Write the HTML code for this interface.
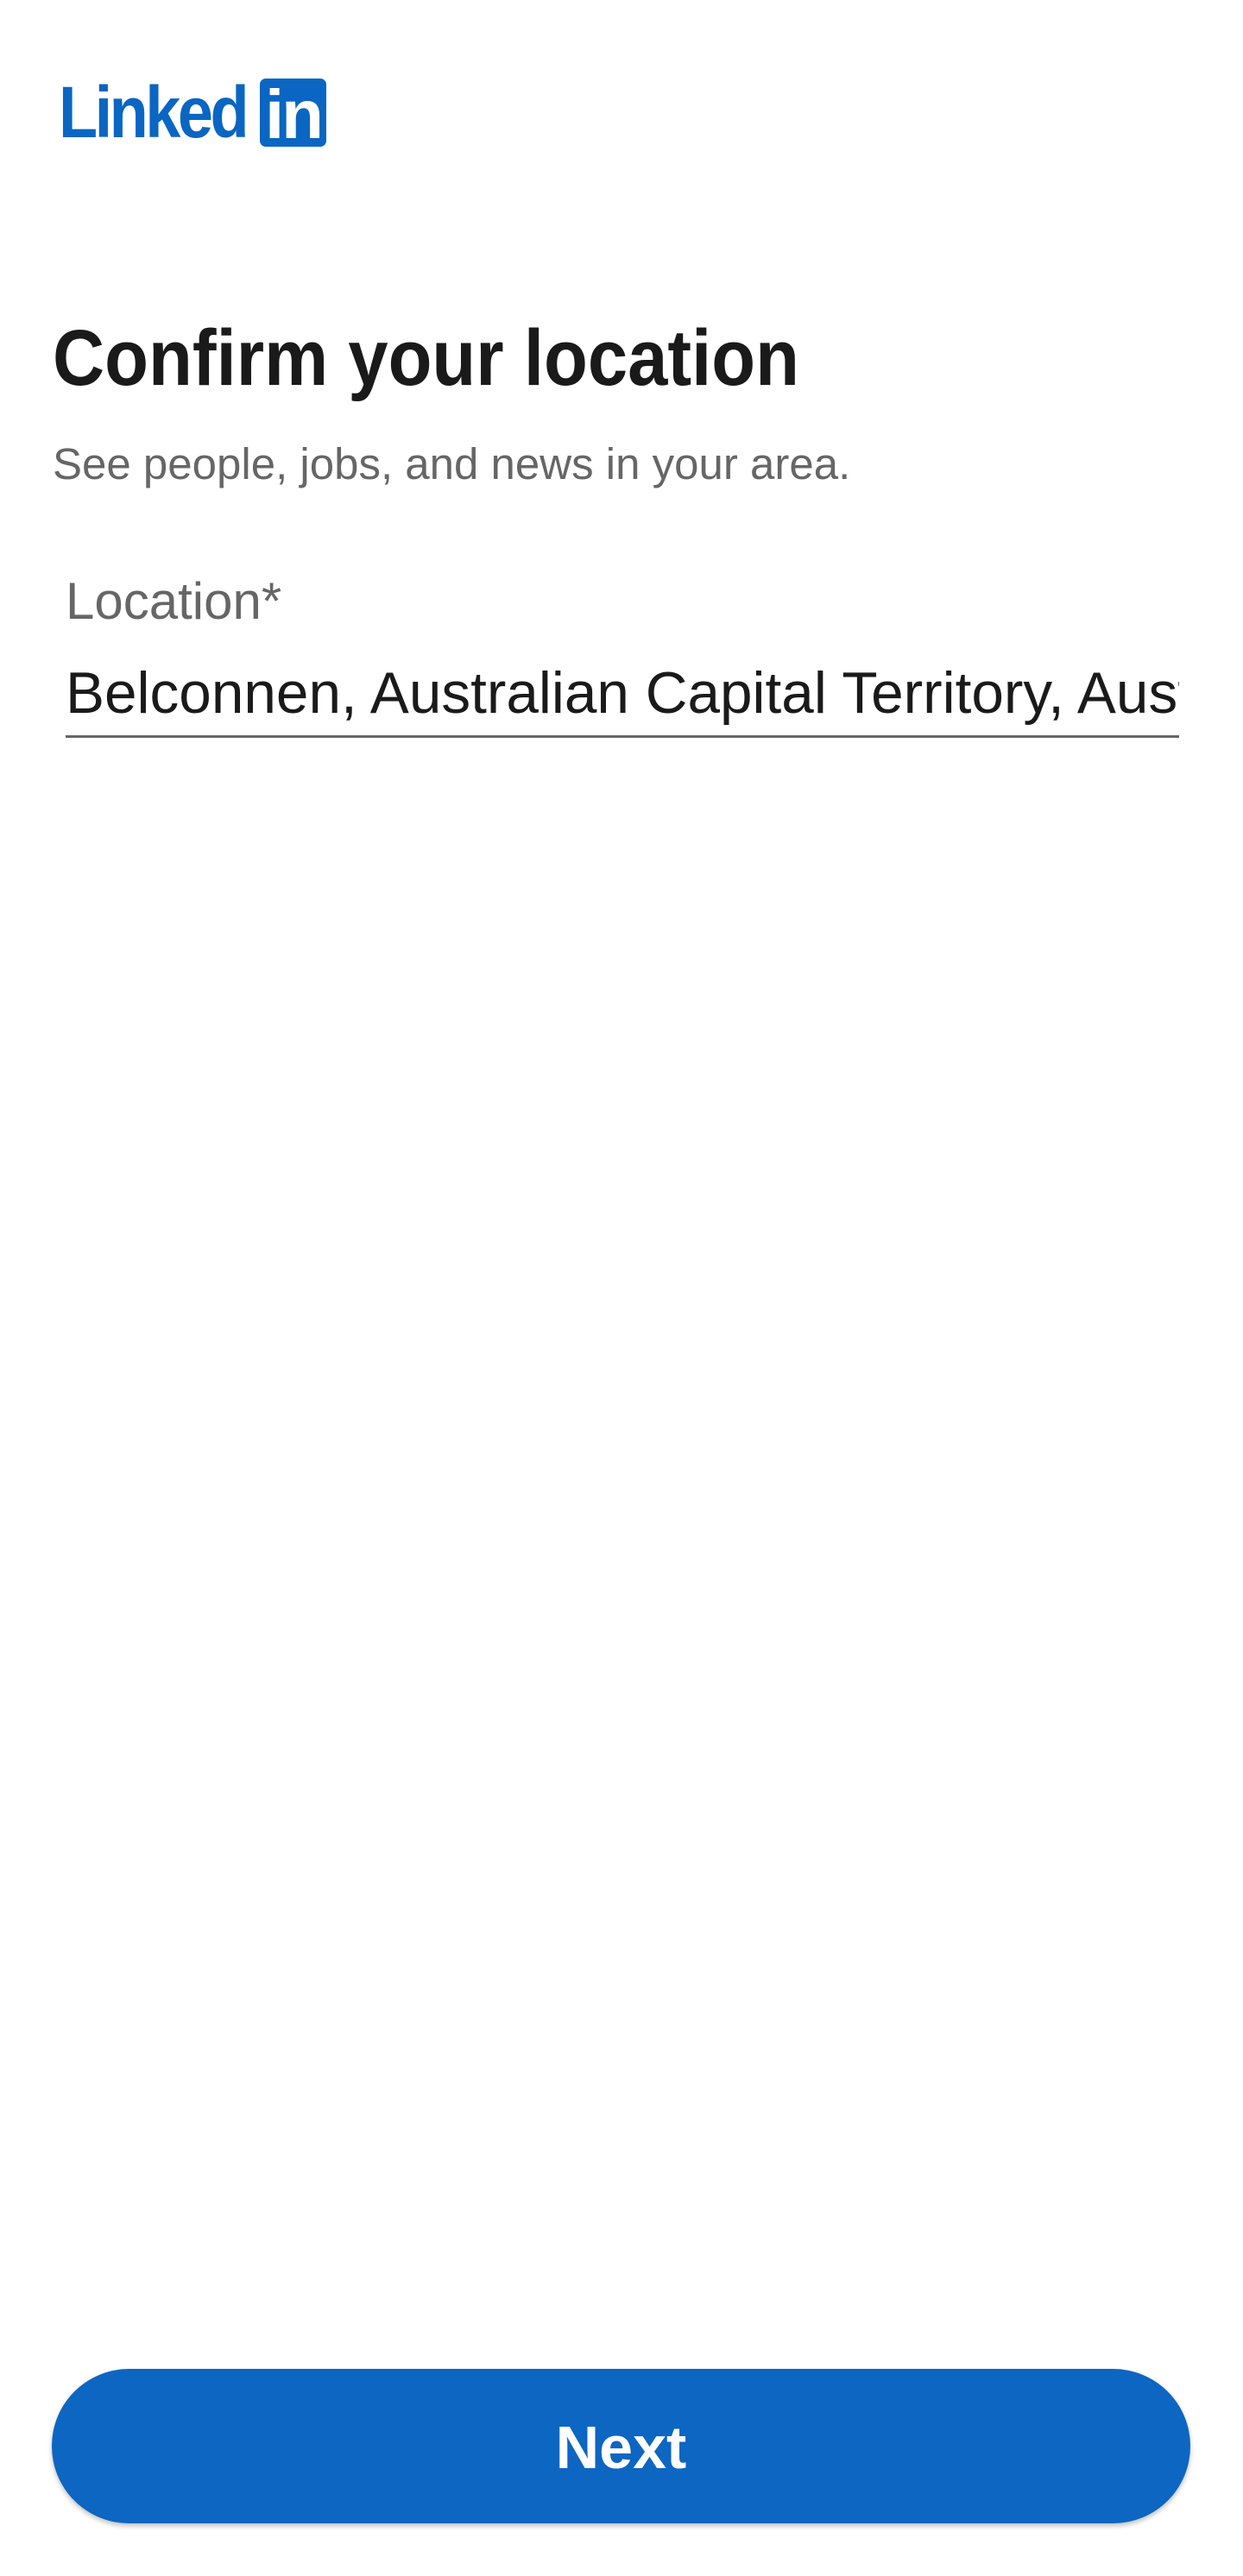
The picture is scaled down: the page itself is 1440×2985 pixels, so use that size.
<!DOCTYPE html>
<html><head><meta charset="utf-8"><style>
html,body{margin:0;padding:0;background:#fff;}
body{width:1440px;height:2985px;position:relative;overflow:hidden;font-family:"Liberation Sans",Arial,sans-serif;}
.logo{position:absolute;left:70px;top:91px;height:80px;}
.lt{position:absolute;left:-2px;top:-6px;font-weight:bold;font-size:84px;color:#0a66c2;letter-spacing:-4px;line-height:90px;transform:scaleX(0.88);transform-origin:left;white-space:nowrap;}
.inb{position:absolute;left:231px;top:0;width:77px;height:79px;background:#0a66c2;border-radius:7px;color:#fff;font-weight:bold;font-size:80px;line-height:84px;text-align:center;letter-spacing:-3px;}
h1{position:absolute;left:61px;top:360px;margin:0;font-size:92px;font-weight:bold;color:#1a1a1a;white-space:nowrap;transform:scaleX(0.905);transform-origin:left;line-height:110px;}
.sub{position:absolute;left:61px;top:508px;font-size:51px;color:#666;white-space:nowrap;line-height:60px;}
.lab{position:absolute;left:76px;top:664px;font-size:60px;color:#666;white-space:nowrap;line-height:66px;}
.val{position:absolute;left:76px;top:766px;width:1290px;overflow:hidden;font-size:67.5px;color:#1a1a1a;white-space:nowrap;line-height:76px;}
.line{position:absolute;left:76px;top:852px;width:1290px;height:3px;background:#666;}
.btn{position:absolute;left:60px;top:2745px;width:1319px;height:179px;border-radius:90px;background:#0c66c2;color:#fff;font-weight:bold;font-size:70px;line-height:182px;text-align:center;box-shadow:0 3px 6px rgba(0,0,0,0.25);}
</style></head><body>
<div class="logo"><div class="lt">Linked</div><div class="inb">in</div></div>
<h1>Confirm your location</h1>
<div class="sub">See people, jobs, and news in your area.</div>
<div class="lab">Location*</div>
<div class="val">Belconnen, Australian Capital Territory, Australia</div>
<div class="line"></div>
<div class="btn">Next</div>
</body></html>
